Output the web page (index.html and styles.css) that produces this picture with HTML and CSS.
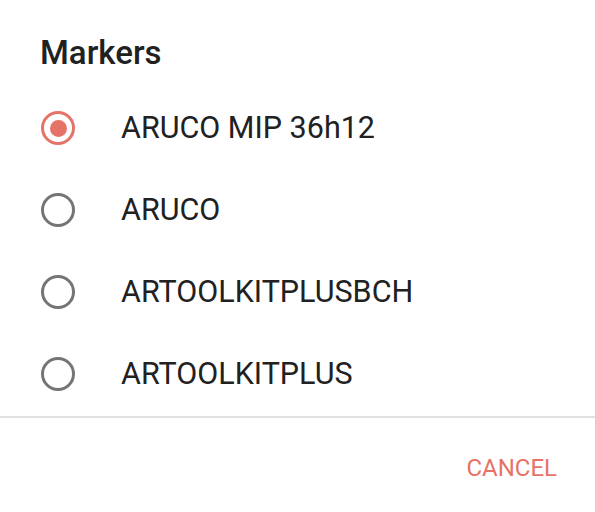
FILE: index.html
```html
<!DOCTYPE html>
<html>
<head>
<meta charset="utf-8">
<link rel="stylesheet" href="styles.css">
</head>
<body>
<div class="dialog">
  <h1 class="title">Markers</h1>
  <ul class="options">
    <li class="option"><span class="radio checked"><span class="dot"></span></span><span class="label">ARUCO MIP 36h12</span></li>
    <li class="option"><span class="radio"></span><span class="label">ARUCO</span></li>
    <li class="option"><span class="radio"></span><span class="label">ARTOOLKITPLUSBCH</span></li>
    <li class="option"><span class="radio"></span><span class="label">ARTOOLKITPLUS</span></li>
  </ul>
  <div class="divider"></div>
  <div class="actions"><button class="btn">CANCEL</button></div>
</div>
</body>
</html>
```
FILE: styles.css
```css
html, body {
  margin: 0;
  padding: 0;
  background: #ffffff;
}
body {
  font-family: Roboto, "Liberation Sans", sans-serif;
  width: 595px;
  height: 512px;
  overflow: hidden;
}
.dialog {
  display: flex;
  flex-direction: column;
}
.title {
  margin: 0;
  padding: 35px 0 0 40px;
  font-size: 33px;
  line-height: 36px;
  font-weight: 500;
  color: #212121;
  height: 52px;
}
.options {
  list-style: none;
  margin: 0;
  padding: 0;
}
.option {
  height: 82px;
  display: flex;
  align-items: center;
  padding-left: 41px;
}
.radio {
  box-sizing: border-box;
  width: 34px;
  height: 34px;
  border-radius: 50%;
  border: 3px solid #757575;
  display: flex;
  align-items: center;
  justify-content: center;
  margin-right: 46px;
}
.radio.checked {
  border-color: #e57368;
}
.dot {
  width: 17px;
  height: 17px;
  border-radius: 50%;
  background: #e57368;
}
.label {
  font-size: 30.5px;
  color: #212121;
  line-height: 36px;
}
.divider {
  height: 2px;
  background: #e0e0e0;
  margin-top: 1px;
}
.actions {
  display: flex;
  justify-content: flex-end;
  padding: 36px 38px 0 0;
}
.btn {
  border: none;
  background: none;
  padding: 0;
  font-family: Roboto, "Liberation Sans", sans-serif;
  font-size: 24px;
  line-height: 28px;
  color: #e57368;
}
```
